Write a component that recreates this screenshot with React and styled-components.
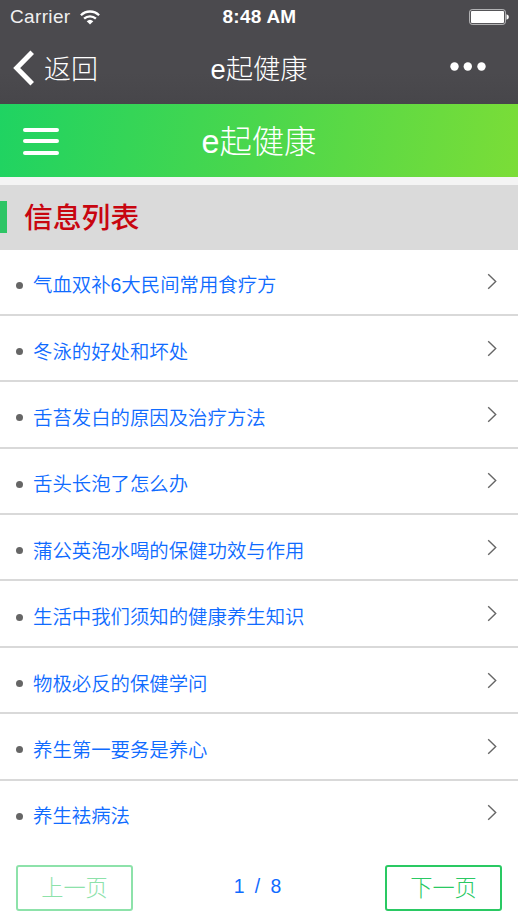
import React from "react";
import styled, { createGlobalStyle } from "styled-components";

const GlobalStyle = createGlobalStyle`
  * { box-sizing: border-box; }
  body { margin: 0; background: #fff; }
  button { font: inherit; padding: 0; background: none; border: 0; }
`;

const Screen = styled.main`
  width: 518px;
  height: 920px;
  overflow: hidden;
  display: flex;
  flex-direction: column;
  background: #fff;
  font-family: "Liberation Sans", "Noto Sans CJK SC", sans-serif;
  font-weight: 300;
  white-space: nowrap;
`;

const TopChrome = styled.header`
  flex: none;
  height: 104px;
  background: linear-gradient(#4b4a4e 0%, #4b4a4e 70%, #47464a 100%);
  color: #fff;
`;

const StatusBar = styled.div`
  height: 34px;
  padding: 0 9px 0 10px;
  display: grid;
  grid-template-columns: 1fr auto 1fr;
  align-items: center;
  font-size: 19px;
`;

const Carrier = styled.div`
  display: flex;
  align-items: center;
  gap: 9px;
  color: #f1f1f1;
  letter-spacing: 0.35px;
`;

const Clock = styled.div`
  font-weight: 700;
  font-size: 19px;
  letter-spacing: 0.25px;
`;

const Battery = styled.svg`
  justify-self: end;
`;

const NavBar = styled.nav`
  height: 68px;
  padding: 0 32px 0 13px;
  display: grid;
  grid-template-columns: 1fr auto 1fr;
  align-items: center;
  font-size: 27px;
`;

const BackButton = styled.button`
  display: flex;
  align-items: center;
  gap: 10px;
  color: #fff;
`;

const BackLabel = styled.span`
  padding-bottom: 2px;
`;

const NavTitle = styled.div`
  margin-left: 19px;
  padding-bottom: 2px;
  font-size: 27.3px;
`;

const MoreIcon = styled.svg`
  justify-self: end;
  margin-bottom: 3px;
`;

const AppHeader = styled.div`
  flex: none;
  height: 72.5px;
  padding: 0 23px;
  display: grid;
  grid-template-columns: 1fr auto 1fr;
  align-items: center;
  color: #fff;
  background: linear-gradient(100deg, #1fd362 0%, #4bd74c 50%, #7bdd37 100%);
`;

const MenuButton = styled.button`
  width: 37px;
  height: 27px;
  margin-top: 2px;
  display: flex;
  flex-direction: column;
  justify-content: space-between;
`;

const MenuLine = styled.span`
  width: 36px;
  height: 4px;
  border-radius: 2px;
  background: #fff;
`;

const AppTitle = styled.h1`
  margin: 0;
  padding-bottom: 2px;
  font-size: 32.3px;
  font-weight: 300;
`;

const SectionHeader = styled.div`
  flex: none;
  height: 73px;
  border-top: 8px solid #f4f4f4;
  display: flex;
  align-items: center;
  gap: 17px;
  background: #dadada;
`;

const SectionMark = styled.span`
  width: 7px;
  height: 32px;
  background: #2dc565;
`;

const SectionTitle = styled.h2`
  margin: 0;
  padding-bottom: 4px;
  color: #c80610;
  font-size: 28.8px;
  font-weight: 500;
`;

const List = styled.ul`
  flex: none;
  margin: 0;
  padding: 0;
  list-style: none;
`;

const Row = styled.li`
  height: 66.4px;
  padding: 4px 21px 0 16px;
  display: flex;
  align-items: center;
  border-bottom: 2px solid ${(p) => (p.$last ? "transparent" : "#d9d9d9")};
`;

const Bullet = styled.span`
  width: 7px;
  height: 7px;
  margin: 3px 10px 0 0;
  border-radius: 50%;
  background: #666;
`;

const RowText = styled.span`
  flex: 1;
  color: #0f6bff;
  font-size: 19.4px;
  font-weight: 350;
`;

const Chevron = styled.svg`
  margin-bottom: 4px;
`;

const Pager = styled.footer`
  height: 46px;
  margin-top: 17.5px;
  padding: 0 16px;
  display: flex;
  align-items: center;
  justify-content: space-between;
`;

const PageButton = styled.button`
  width: 117px;
  height: 46px;
  padding-bottom: 3px;
  border: 2px solid ${(p) => (p.$muted ? "#8de2aa" : "#2ac963")};
  border-radius: 3px;
  color: ${(p) => (p.$muted ? "#8de2aa" : "#2ac963")};
  font-size: 22.2px;
  font-weight: 300;
`;

const PageCount = styled.span`
  padding: 0 3px 3px 0;
  color: #0f6bff;
  font-size: 19.4px;
  word-spacing: 5px;
`;

const items = [
  "气血双补6大民间常用食疗方",
  "冬泳的好处和坏处",
  "舌苔发白的原因及治疗方法",
  "舌头长泡了怎么办",
  "蒲公英泡水喝的保健功效与作用",
  "生活中我们须知的健康养生知识",
  "物极必反的保健学问",
  "养生第一要务是养心",
  "养生袪病法",
];

export default function App() {
  return (
    <Screen lang="zh-CN">
      <GlobalStyle />
      <TopChrome>
        <StatusBar>
          <Carrier>
            Carrier
            <svg width="20" height="15" viewBox="0 0 20 15" fill="none" stroke="#fff" strokeWidth="2.3">
              <path d="M.9 5.2a13 13 0 0 1 18.2 0" />
              <path d="M4.1 8.7a8.5 8.5 0 0 1 11.8 0" />
              <path d="M6.7 11.3a4.8 4.8 0 0 1 6.6 0L10 14.6Z" fill="#fff" stroke="none" />
            </svg>
          </Carrier>
          <Clock>8:48 AM</Clock>
          <Battery width="40" height="16" viewBox="0 0 40 16">
            <rect x=".6" y=".6" width="35.8" height="14.8" rx="2.5" fill="none" stroke="#bdbdbf" />
            <rect x="2" y="2" width="33" height="12" rx="1" fill="#fff" />
            <path d="M37.5 5.2q2.4.6 2.4 2.8t-2.4 2.8Z" fill="#fff" />
          </Battery>
        </StatusBar>
        <NavBar>
          <BackButton>
            <svg width="21" height="36" viewBox="0 0 21 36" fill="none" stroke="#fff" strokeWidth="5">
              <path d="M19.2 2.2 3.7 18l15.5 15.8" />
            </svg>
            <BackLabel>返回</BackLabel>
          </BackButton>
          <NavTitle>e起健康</NavTitle>
          <MoreIcon width="36" height="9" viewBox="0 0 36 9" fill="#fff">
            <circle cx="4.5" cy="4.5" r="4.2" />
            <circle cx="17.8" cy="4.5" r="4.2" />
            <circle cx="31.5" cy="4.5" r="4.2" />
          </MoreIcon>
        </NavBar>
      </TopChrome>
      <AppHeader>
        <MenuButton aria-label="菜单">
          <MenuLine />
          <MenuLine />
          <MenuLine />
        </MenuButton>
        <AppTitle>e起健康</AppTitle>
      </AppHeader>
      <SectionHeader>
        <SectionMark />
        <SectionTitle>信息列表</SectionTitle>
      </SectionHeader>
      <List>
        {items.map((text, i) => (
          <Row key={text} $last={i === items.length - 1}>
            <Bullet />
            <RowText>{text}</RowText>
            <Chevron width="10" height="17" viewBox="0 0 10 17" fill="none" stroke="#666" strokeWidth="1.4">
              <path d="m1.2 1.2 7.5 7.3-7.5 7.3" />
            </Chevron>
          </Row>
        ))}
      </List>
      <Pager>
        <PageButton $muted>上一页</PageButton>
        <PageCount>1 / 8</PageCount>
        <PageButton>下一页</PageButton>
      </Pager>
    </Screen>
  );
}
